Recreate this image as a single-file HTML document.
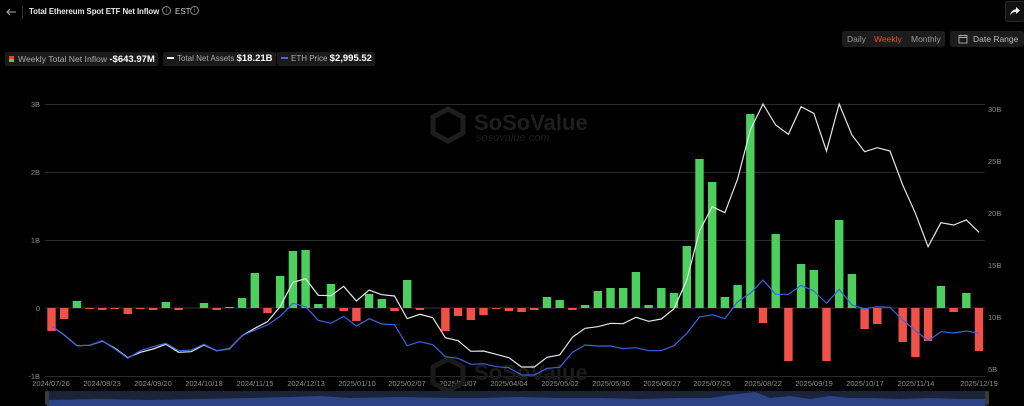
<!DOCTYPE html>
<html><head><meta charset="utf-8"><style>
*{margin:0;padding:0;box-sizing:border-box}
body{width:1024px;height:406px;background:#000;overflow:hidden;font-family:"Liberation Sans",sans-serif;position:relative;color:#ddd}
.abs{position:absolute}
.leg{position:absolute;top:52px;height:14px;background:#1a1a1a;border-radius:2px;font-size:8px;color:#aaa;line-height:14px;padding:0 3px;white-space:nowrap}
.leg b{color:#fff;font-size:9.5px}
.ax{font-size:7.5px;fill:#8a8a8a;font-family:"Liberation Sans",sans-serif}
</style></head><body>
<svg class="abs" style="left:5px;top:6px" width="12" height="12" viewBox="0 0 12 12"><path d="M11 6H2M5 3L2 6L5 9" stroke="#aaa" stroke-width="1.1" fill="none"/></svg>
<div class="abs" style="left:22px;top:6px;width:1px;height:13px;background:#333"></div>
<div class="abs" style="left:29px;top:7px;font-size:7.9px;font-weight:bold;color:#e8e8e8;letter-spacing:-0.1px;white-space:nowrap">Total Ethereum Spot ETF Net Inflow</div>
<div class="abs" style="left:162px;top:6px;width:9px;height:9px;border:1px solid #888;border-radius:50%;font-size:6px;color:#888;text-align:center;line-height:8px">i</div>
<div class="abs" style="left:175px;top:7px;font-size:8px;color:#ccc">EST</div>
<div class="abs" style="left:190px;top:6px;width:9px;height:9px;border:1px solid #888;border-radius:50%;font-size:6px;color:#888;text-align:center;line-height:8px">i</div>

<div class="abs" style="left:1005px;top:1px;width:20px;height:21px;background:#111;border:1px solid #2a2a2a;border-radius:3px"></div>
<svg class="abs" style="left:1009px;top:6px" width="12" height="11" viewBox="0 0 12 11"><path d="M7 1L11 4.5L7 8V6C4 6 2.5 7 1 9.5C1.5 6 3.5 3.5 7 3.2Z" fill="#eee"/></svg>

<div class="abs" style="left:842px;top:31px;width:103px;height:16px;background:#1c1c1c;border-radius:3px;font-size:8.5px;line-height:16px;color:#999">
<span style="position:absolute;left:5px">Daily</span><span style="position:absolute;left:32px;color:#e8502f">Weekly</span><span style="position:absolute;left:69px">Monthly</span></div>
<div class="abs" style="left:950px;top:31px;width:74px;height:16px;background:#1c1c1c;border-radius:3px;font-size:8.5px;line-height:16px;color:#bbb">
<svg style="position:absolute;left:8px;top:3px" width="10" height="10" viewBox="0 0 10 10"><rect x="1" y="1.5" width="8" height="7.5" fill="none" stroke="#aaa" stroke-width="0.9"/><path d="M1 3.5H9M3 0.5V2.5M7 0.5V2.5" stroke="#aaa" stroke-width="0.9"/></svg>
<span style="position:absolute;left:23px">Date Range</span></div>

<div class="leg" style="left:5px;font-size:8.6px"><span style="display:inline-block;width:5px;height:6px;background:linear-gradient(#e8453c 50%,#4cd05d 50%);margin:0 4px 0 1px"></span>Weekly Total Net Inflow <b>-$643.97M</b></div>
<div class="leg" style="left:163px"><span style="display:inline-block;width:7px;height:2px;background:#eee;vertical-align:middle;margin:0 3px 2px 1px"></span>Total Net Assets <b>$18.21B</b></div>
<div class="leg" style="left:277px"><span style="display:inline-block;width:7px;height:2px;background:#3b6cf0;vertical-align:middle;margin:0 3px 2px 1px"></span>ETH Price <b>$2,995.52</b></div>

<svg class="abs" style="left:0;top:0" width="1024" height="406">
<g stroke="#2a2a2a" stroke-width="1">
<line x1="45" y1="104.5" x2="985" y2="104.5"/><line x1="45" y1="172.5" x2="985" y2="172.5"/><line x1="45" y1="240.5" x2="985" y2="240.5"/><line x1="45" y1="376.5" x2="985" y2="376.5"/>
</g>
<line x1="45" y1="308" x2="985" y2="308" stroke="#333"/>
<g class="ax" text-anchor="end">
<text x="40" y="107">3B</text><text x="40" y="175">2B</text><text x="40" y="243">1B</text><text x="40" y="311">0</text><text x="40" y="379">-1B</text></g>
<g class="ax"><text x="988" y="112">30B</text><text x="988" y="164">25B</text><text x="988" y="216">20B</text><text x="988" y="268">15B</text><text x="988" y="320">10B</text><text x="988" y="372">5B</text></g>
<g class="ax" font-size="8" text-anchor="middle" fill="#999">
<text x="51" y="386">2024/07/26</text><text x="102" y="386">2024/08/23</text><text x="153" y="386">2024/09/20</text><text x="204" y="386">2024/10/18</text><text x="255" y="386">2024/11/15</text><text x="306" y="386">2024/12/13</text><text x="357" y="386">2025/01/10</text><text x="407" y="386">2025/02/07</text><text x="458" y="386">2025/03/07</text><text x="509" y="386">2025/04/04</text><text x="560" y="386">2025/05/02</text><text x="611" y="386">2025/05/30</text><text x="662" y="386">2025/06/27</text><text x="712" y="386">2025/07/25</text><text x="763" y="386">2025/08/22</text><text x="814" y="386">2025/09/19</text><text x="865" y="386">2025/10/17</text><text x="916" y="386">2025/11/14</text><text x="979" y="386">2025/12/19</text></g>

<g>
<path d="M448 109L463 117V133L448 141L433 133V117Z" fill="none" stroke="#1e1e1e" stroke-width="5"/>
<text x="474" y="130" font-size="22" font-weight="bold" font-family="Liberation Sans,sans-serif" fill="#1f1f1f">SoSoValue</text>
<text x="476" y="141" font-size="11" font-style="italic" font-family="Liberation Sans,sans-serif" fill="#1c1c1c">sosovalue.com</text>
<path d="M448 359L463 367V383L448 391L433 383V367Z" fill="none" stroke="#1a1a1a" stroke-width="5"/>
<text x="474" y="380" font-size="22" font-weight="bold" font-family="Liberation Sans,sans-serif" fill="#1b1b1b">SoSoValue</text>
</g>

<g fill="#4ccf5c">
<rect x="72.7" y="301" width="8.4" height="7"/><rect x="161.6" y="302" width="8.4" height="6"/><rect x="199.8" y="303" width="8.4" height="5"/><rect x="225.2" y="307" width="8.4" height="1"/><rect x="237.9" y="298" width="8.4" height="10"/><rect x="250.6" y="273" width="8.4" height="35"/><rect x="276" y="276" width="8.4" height="32"/><rect x="288.7" y="251" width="8.4" height="57"/><rect x="301.4" y="250" width="8.4" height="58"/><rect x="314.1" y="304" width="8.4" height="4"/><rect x="326.8" y="284" width="8.4" height="24"/><rect x="364.9" y="294" width="8.4" height="14"/><rect x="377.6" y="299" width="8.4" height="9"/><rect x="403" y="280" width="8.4" height="28"/>
<rect x="542.8" y="297" width="8.4" height="11"/><rect x="555.5" y="300" width="8.4" height="8"/><rect x="580.9" y="305" width="8.4" height="3"/><rect x="593.6" y="291" width="8.4" height="17"/><rect x="606.3" y="288" width="8.4" height="20"/><rect x="619" y="288" width="8.4" height="20"/><rect x="631.7" y="272" width="8.4" height="36"/><rect x="644.4" y="305" width="8.4" height="3"/><rect x="657.1" y="288" width="8.4" height="20"/><rect x="669.8" y="293" width="8.4" height="15"/><rect x="682.6" y="246" width="8.4" height="62"/><rect x="695.3" y="159" width="8.4" height="149"/><rect x="708" y="182" width="8.4" height="126"/><rect x="720.7" y="297" width="8.4" height="11"/><rect x="733.4" y="285" width="8.4" height="23"/><rect x="746.1" y="114" width="8.4" height="194"/><rect x="771.5" y="234" width="8.4" height="74"/><rect x="796.9" y="264" width="8.4" height="44"/><rect x="809.6" y="270" width="8.4" height="38"/><rect x="835" y="220" width="8.4" height="88"/><rect x="847.7" y="274" width="8.4" height="34"/><rect x="936.7" y="286" width="8.4" height="22"/><rect x="962.1" y="293" width="8.4" height="15"/>
</g>
<g fill="#f0524a">
<rect x="47.3" y="308" width="8.4" height="23"/><rect x="60" y="308" width="8.4" height="11"/><rect x="85.4" y="308" width="8.4" height="1"/><rect x="98.1" y="308" width="8.4" height="2"/><rect x="110.8" y="308" width="8.4" height="1"/><rect x="123.5" y="308" width="8.4" height="6"/><rect x="136.2" y="308" width="8.4" height="1"/><rect x="148.9" y="308" width="8.4" height="2"/><rect x="174.4" y="308" width="8.4" height="2"/><rect x="212.5" y="308" width="8.4" height="2"/><rect x="263.3" y="308" width="8.4" height="5"/><rect x="339.5" y="308" width="8.4" height="3"/><rect x="352.2" y="308" width="8.4" height="13"/><rect x="390.3" y="308" width="8.4" height="3"/><rect x="415.7" y="308" width="8.4" height="2"/><rect x="441.2" y="308" width="8.4" height="23"/><rect x="453.9" y="308" width="8.4" height="8"/><rect x="466.6" y="308" width="8.4" height="12"/><rect x="479.3" y="308" width="8.4" height="7"/><rect x="492" y="308" width="8.4" height="1"/><rect x="504.7" y="308" width="8.4" height="3"/><rect x="517.4" y="308" width="8.4" height="4"/><rect x="530.1" y="308" width="8.4" height="2"/><rect x="568.2" y="308" width="8.4" height="2"/>
<rect x="758.8" y="308" width="8.4" height="15"/><rect x="784.2" y="308" width="8.4" height="53"/><rect x="822.3" y="308" width="8.4" height="53"/><rect x="860.4" y="308" width="8.4" height="21"/><rect x="873.1" y="308" width="8.4" height="16"/><rect x="898.5" y="308" width="8.4" height="34"/><rect x="911.2" y="308" width="8.4" height="49"/><rect x="923.9" y="308" width="8.4" height="33"/><rect x="949.4" y="308" width="8.4" height="4"/><rect x="974.8" y="308" width="8.4" height="43"/>
</g>

<polyline fill="none" stroke="#e6e6e6" stroke-width="1.2" points="51.5,326 64.2,335 76.9,345.7 89.6,345.3 102.3,341 115,348.3 127.7,357.7 140.4,352.3 153.1,349 165.8,344.3 178.6,352.3 191.3,351.7 204,345 216.7,350.7 229.4,348.7 242.1,335.7 254.8,328.3 267.5,321.7 280.2,306.7 292.9,282.3 305.6,278.7 318.3,295.3 331,295.7 343.7,286.3 356.4,301 369.1,290 381.8,294.7 394.5,296 407.2,318.7 419.9,314.3 432.7,317.7 445.4,337.7 458.1,340.7 470.8,351.3 483.5,351 496.2,354.3 508.9,357.7 521.6,367 534.3,367 547,357.3 559.7,355 572.4,337.3 585.1,328.3 597.8,326.7 610.5,323.3 623.2,323.7 635.9,317.3 648.6,321.3 661.3,319 674,308.7 686.8,280 699.5,231 712.2,206.7 724.9,212.7 737.6,179 750.3,130 763,104 775.7,125 788.4,134.3 801.1,106.7 813.8,113.3 826.5,151 839.2,104 851.9,135 864.6,151.7 877.3,147.7 890,151 902.7,185 915.4,213.3 928.1,246.7 940.9,222.7 953.6,225 966.3,220 979,232.3"/>
<polyline fill="none" stroke="#3a63e0" stroke-width="1.2" points="51.5,326 64.2,335 76.9,345.7 89.6,345.3 102.3,340.7 115,349 127.7,358.3 140.4,350.7 153.1,346.7 165.8,343.3 178.6,350.7 191.3,350 204,344.3 216.7,350.7 229.4,349 242.1,335.7 254.8,330 267.5,325 280.2,316.3 292.9,303.3 305.6,306.7 318.3,320.3 331,323.3 343.7,316.3 356.4,326 369.1,318.7 381.8,324 394.5,324.7 407.2,345.7 419.9,341.7 432.7,344.7 445.4,356.7 458.1,358.3 470.8,364.3 483.5,363.7 496.2,366.7 508.9,367.7 521.6,375 534.3,375 547,368.3 559.7,367.3 572.4,352.3 585.1,345 597.8,346 610.5,346 623.2,348.7 635.9,347.7 648.6,350.7 661.3,350.7 674,345.7 686.8,333.3 699.5,317 712.2,314.7 724.9,318.7 737.6,301.7 750.3,293.3 763,280 775.7,294.3 788.4,294.3 801.1,285.3 813.8,291 826.5,303.3 839.2,289.3 851.9,305 864.6,309 877.3,306.7 890,307.3 902.7,320 915.4,330.7 928.1,340.7 940.9,331.7 953.6,333 966.3,331 979,333.3"/>

<rect x="47" y="391" width="940" height="15" fill="#1a2338"/>
<path d="M47 406V400L100 399L150 400L200 399L250 398L290 397L320 396L350 398L400 397L450 398L480 398L520 397L560 398L600 398L640 399L680 398L710 398L730 395L755 392L770 398L790 396L810 399L830 396L850 398L870 398L900 399L930 398L960 399L985 399V406Z" fill="#2c4485"/>
<rect x="45" y="391" width="4" height="14" rx="1.5" fill="#3a3a3a"/>
<rect x="985" y="391" width="4" height="14" rx="1.5" fill="#3a3a3a"/>
</svg>
</body></html>
